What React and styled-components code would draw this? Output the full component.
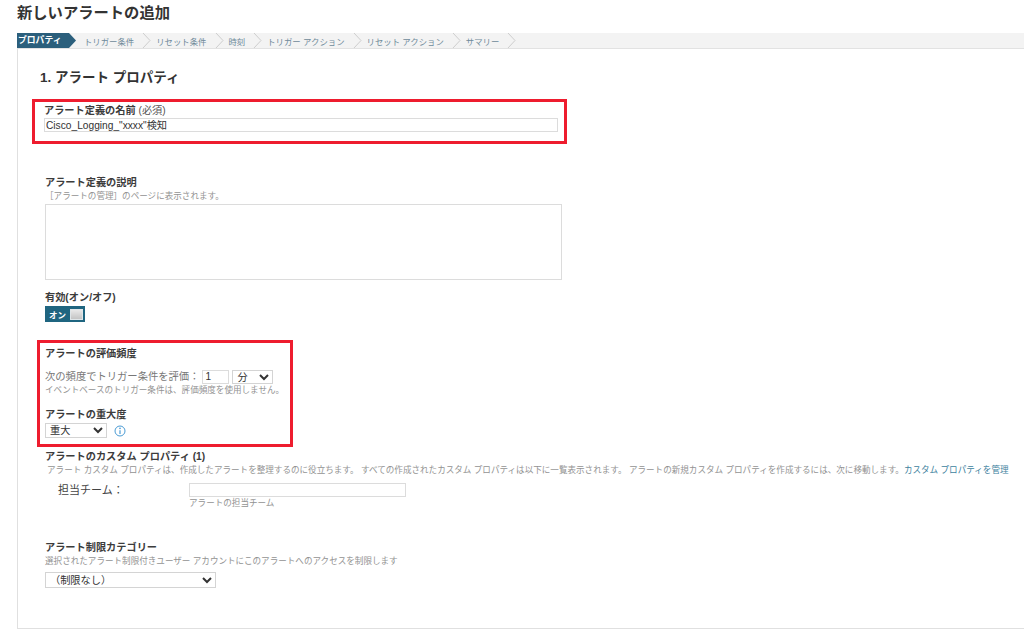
import React from "react";
import styled, { createGlobalStyle } from "styled-components";

const steps = [
  "トリガー条件",
  "リセット条件",
  "時刻",
  "トリガー アクション",
  "リセット アクション",
  "サマリー",
];

const fontStack = `"Liberation Sans", "Noto Sans CJK JP", sans-serif`;

const Global = createGlobalStyle`
  html, body {
    margin: 0;
    padding: 0;
    background: #fff;
    overflow: hidden;
  }
  body {
    font-family: ${fontStack};
    color: #444;
  }
`;

const Page = styled.div`
  width: 1024px;
  height: 639px;
  padding-left: 17px;
  box-sizing: border-box;
  overflow: hidden;
`;

const Title = styled.h1`
  margin: 0;
  height: 33px;
  font-size: 15.3px;
  line-height: 25px;
  font-weight: bold;
  color: #333;
`;

const StepBar = styled.div`
  display: flex;
  align-items: center;
  height: 15px;
  background: #f3f3f3;
  border-bottom: 1px solid #e2e2e2;
`;

const ActiveStep = styled.div`
  width: 59px;
  height: 15px;
  padding-left: 1px;
  box-sizing: border-box;
  background: #2b5f7c;
  color: #fff;
  font-size: 8.8px;
  font-weight: bold;
  line-height: 15px;
  white-space: nowrap;
  clip-path: polygon(0 0, 52px 0, 59px 50%, 52px 100%, 0 100%);
`;

const Step = styled.div`
  display: flex;
  align-items: center;
  gap: 8px;
  margin-left: ${(p) => p.$offset}px;
  font-size: 8.4px;
  color: #6f8a9a;
  white-space: nowrap;
`;

const Panel = styled.div`
  height: 580px;
  box-sizing: border-box;
  border-left: 1px solid #e0e0e0;
  border-bottom: 1px solid #e0e0e0;
  padding: 21px 0 0 15px;
`;

const Heading = styled.h2`
  margin: 0 0 0 7px;
  height: 29px;
  font-size: 13.5px;
  line-height: 16px;
  font-weight: bold;
  color: #333;
`;

const RedBox = styled.div`
  box-sizing: border-box;
  border: 3px solid #ee1c2e;
  width: ${(p) => p.$w}px;
  height: ${(p) => p.$h}px;
  margin-left: ${(p) => p.$ml}px;
  margin-top: ${(p) => p.$mt || 0}px;
  padding-left: ${(p) => p.$pl}px;
  padding-top: ${(p) => p.$pt}px;
`;

const Label = styled.div`
  margin-top: ${(p) => p.$mt || 0}px;
  font-size: 10.2px;
  line-height: 13px;
  font-weight: bold;
  color: #3c3c3c;
`;

const Required = styled.span`
  font-weight: normal;
  color: #555;
`;

const Help = styled.div`
  margin: ${(p) => p.$mt || 0}px 0 ${(p) => p.$mb || 0}px ${(p) => p.$ml || 0}px;
  font-size: 8.57px;
  line-height: 11px;
  color: #929292;
  white-space: nowrap;
`;

const TextField = styled.input`
  display: block;
  box-sizing: border-box;
  width: ${(p) => p.$w}px;
  height: 14px;
  margin: ${(p) => p.$mt || 0}px 0 0;
  padding: 0 0 2px 1px;
  border: 1px solid #dcdcdc;
  border-radius: 0;
  outline: none;
  background: #fff;
  font-family: ${fontStack};
  font-size: 10.2px;
  line-height: 11px;
  color: #333;
`;

const Section = styled.div`
  margin-left: 12px;
  margin-top: ${(p) => p.$mt || 0}px;
`;

const TextArea = styled.textarea`
  display: block;
  box-sizing: border-box;
  width: 517px;
  height: 76px;
  margin: 0;
  padding: 0;
  border: 1px solid #dcdcdc;
  border-radius: 0;
  outline: none;
  resize: none;
`;

const Toggle = styled.div`
  display: flex;
  align-items: center;
  gap: 4px;
  box-sizing: border-box;
  width: 40px;
  height: 16px;
  margin-top: 2px;
  padding-left: 4px;
  background: #1f6580;
  color: #fff;
  font-size: 8.5px;
  font-weight: bold;
`;

const Knob = styled.span`
  display: block;
  width: 13px;
  height: 11px;
  background: linear-gradient(#e8e8e8, #c4c4c4);
  border: 1px solid #dfe6e9;
  box-sizing: border-box;
`;

const Row = styled.div`
  display: flex;
  align-items: center;
  gap: ${(p) => p.$gap || 0}px;
  margin-top: ${(p) => p.$mt || 0}px;
`;

const RowLabel = styled.span`
  font-size: 10.3px;
  line-height: 14px;
  color: #777;
  white-space: nowrap;
`;

const Select = styled.select`
  display: block;
  box-sizing: border-box;
  width: ${(p) => p.$w}px;
  height: ${(p) => p.$h}px;
  margin: ${(p) => p.$mt || 0}px 0 0;
  padding: 0;
  border: 1px solid #d4d4d4;
  border-radius: 0;
  outline: none;
  background: #fff;
  font-family: ${fontStack};
  font-size: 10.2px;
  color: #333;
`;

const NumberBox = styled(TextField)`
  width: 27px;
  padding-left: 2px;
  font-size: 10px;
`;

const TeamLabel = styled.span`
  width: 144px;
  padding-left: 13px;
  box-sizing: border-box;
  font-size: 11px;
  line-height: 14px;
  color: #444;
  white-space: nowrap;
`;

const Link = styled.a`
  color: #3d7f9e;
`;

const StepArrow = () => (
  <svg width="9" height="15" viewBox="0 0 9 15" fill="none" stroke="#c4c4c4" strokeWidth="0.8">
    <path d="M1 0 L8 7.5 L1 15" />
  </svg>
);

const InfoIcon = () => (
  <svg width="12" height="12" viewBox="0 0 12 12" fill="none">
    <circle cx="6" cy="6" r="5" stroke="#4a9bd4" strokeWidth="1" />
    <path d="M6 5.2 V9" stroke="#4a9bd4" strokeWidth="1.2" />
    <circle cx="6" cy="3.4" r="0.8" fill="#4a9bd4" />
  </svg>
);

export default function App() {
  return (
    <Page>
      <Global />
      <Title>新しいアラートの追加</Title>
      <StepBar>
        <ActiveStep>プロパティ</ActiveStep>
        {steps.map((s, i) => (
          <Step key={s} $offset={i === 0 ? 8 : 5}>
            {s}
            <StepArrow />
          </Step>
        ))}
      </StepBar>
      <Panel>
        <Heading>1. アラート プロパティ</Heading>
        <RedBox $w={535} $h={45} $ml={-1} $pl={9} $pt={2}>
          <Label>
            アラート定義の名前 <Required>(必須)</Required>
          </Label>
          <TextField $w={514} $mt={1} readOnly value={'Cisco_Logging_"xxxx"検知'} />
        </RedBox>

        <Section $mt={32}>
          <Label>アラート定義の説明</Label>
          <Help $mt={2} $mb={2}>［アラートの管理］のページに表示されます。</Help>
          <TextArea readOnly />
        </Section>

        <Section $mt={11}>
          <Label>有効(オン/オフ)</Label>
          <Toggle>
            オン
            <Knob />
          </Toggle>
        </Section>

        <RedBox $w={256} $h={107} $ml={4} $mt={18} $pl={5} $pt={4}>
          <Label>アラートの評価頻度</Label>
          <Row $gap={3} $mt={10}>
            <RowLabel>次の頻度でトリガー条件を評価：</RowLabel>
            <NumberBox $w={27} readOnly value="1" />
            <Select $w={41} $h={14} defaultValue="分">
              <option>分</option>
              <option>時間</option>
            </Select>
          </Row>
          <Help $mt={1}>イベントベースのトリガー条件は、評価頻度を使用しません。</Help>
          <Label $mt={12}>アラートの重大度</Label>
          <Row $gap={7} $mt={2}>
            <Select $w={62} $h={15} defaultValue="重大">
              <option>重大</option>
              <option>警告</option>
            </Select>
            <InfoIcon />
          </Row>
        </RedBox>

        <Section $mt={3}>
          <Label>アラートのカスタム プロパティ (1)</Label>
          <Help $mt={2} $ml={2}>
            アラート カスタム プロパティは、作成したアラートを整理するのに役立ちます。 すべての作成されたカスタム プロパティは以下に一覧表示されます。 アラートの新規カスタム プロパティを作成するには、次に移動します。
            <Link>カスタム プロパティを管理</Link>
          </Help>
          <Row $mt={7}>
            <TeamLabel>担当チーム：</TeamLabel>
            <TextField $w={217} readOnly />
          </Row>
          <Help $ml={144} $mt={1}>アラートの担当チーム</Help>
        </Section>

        <Section $mt={32}>
          <Label>アラート制限カテゴリー</Label>
          <Help $mt={2}>選択されたアラート制限付きユーザー アカウントにこのアラートへのアクセスを制限します</Help>
          <Select $w={171} $h={16} $mt={5} defaultValue="（制限なし）">
            <option>（制限なし）</option>
          </Select>
        </Section>
      </Panel>
    </Page>
  );
}
